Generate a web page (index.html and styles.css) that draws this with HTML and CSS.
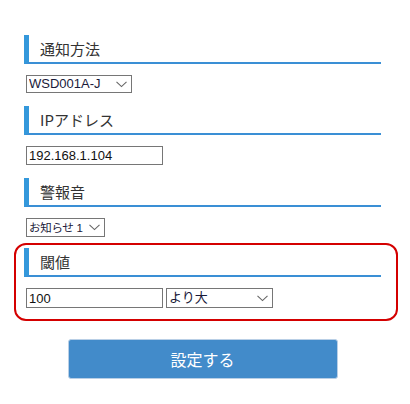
FILE: index.html
```html
<!DOCTYPE html>
<html lang="ja">
<head>
  <meta charset="UTF-8" />
  <title>設定</title>
  <link rel="stylesheet" href="styles.css">
</head>
<body>
  <div class="page">
    <!-- 通知方法 -->
    <div class="item">
      <h2 class="midashi">通知方法</h2>
      <select class="sentaku w-tsuchi">
        <option>WSD001A-J</option>
      </select>
    </div>
    <!-- IPアドレス -->
    <div class="item">
      <h2 class="midashi">IPアドレス</h2>
      <input class="nyuryoku" type="text" value="192.168.1.104">
    </div>
    <!-- 警報音 -->
    <div class="item mae-waku">
      <h2 class="midashi">警報音</h2>
      <select class="sentaku w-oto">
        <option>お知らせ 1</option>
      </select>
    </div>
    <!-- 閾値（赤枠） -->
    <div class="item waku">
      <h2 class="midashi">閾値</h2>
      <div class="gyou">
        <input class="nyuryoku" type="text" value="100">
        <select class="sentaku w-hikaku">
          <option>より大</option>
        </select>
      </div>
    </div>
    <div class="botan-area">
      <button class="botan">設定する</button>
    </div>
  </div>
</body>
</html>
```

FILE: styles.css
```css
/* 全体 */
body {
  margin: 0;
  padding: 0;
  background: #fff;
  font-family: "Noto Sans CJK JP", "Noto Sans", sans-serif;
  color: #333;
}
.page {
  width: 357px;
  margin-left: 24px;
  padding-top: 35px;
}
.item {
  margin-bottom: 13px;
}
.mae-waku {
  margin-bottom: 6px;
}
/* 見出し */
.midashi {
  display: flex;
  align-items: center;
  height: 29px;
  box-sizing: border-box;
  margin: 0 0 11px 0;
  padding: 0 0 0 11px;
  border-left: 5px solid #3498db;
  border-bottom: 2px solid #3a8fd5;
  font-size: 15px;
  font-weight: normal;
  line-height: 20px;
  color: #333;
}
/* セレクト */
.sentaku {
  -webkit-appearance: none;
  appearance: none;
  display: block;
  height: 18px;
  margin: 0 0 0 2px;
  padding: 0 14px 0 2px;
  border: 1px solid #767676;
  border-radius: 0;
  background: #fff url("data:image/svg+xml;utf8,<svg xmlns='http://www.w3.org/2000/svg' width='11' height='7'><path d='M0.5 0.8 L5.5 5.6 L10.5 0.8' fill='none' stroke='%23666' stroke-width='1.1'/></svg>") no-repeat right 4px center;
  font-family: "Liberation Sans", "Noto Sans CJK JP", sans-serif;
  font-size: 13px;
  line-height: 16px;
  color: #1a1a3a;
  box-sizing: border-box;
}
.w-tsuchi { width: 106px; }
.w-oto { width: 79px; height: 19px; font-size: 11.5px; letter-spacing: -0.3px; }
.w-hikaku { width: 107px; height: 20px; margin-left: 0; }
/* テキスト入力 */
.nyuryoku {
  display: block;
  width: 137px;
  height: 19px;
  margin: 0 0 0 2px;
  padding: 0 2px;
  border: 1px solid #767676;
  border-radius: 0;
  font-family: "Liberation Sans", sans-serif;
  font-size: 13px;
  color: #111;
  box-sizing: border-box;
}
.gyou {
  display: flex;
  gap: 3px;
}
.gyou .nyuryoku {
  height: 20px;
}
/* 赤枠 */
.waku {
  margin: 0 -17px 0 -10px;
  padding: 3px 15px 11px 8px;
  border: 2px solid #d40000;
  border-radius: 12px;
}
/* ボタン */
.botan-area {
  display: flex;
  justify-content: center;
  padding-top: 18px;
}
.botan {
  width: 270px;
  height: 40px;
  border: 1px solid #b9cfe6;
  border-radius: 3px;
  background: #428bca;
  color: #fff;
  font-family: "Noto Sans CJK JP", sans-serif;
  font-size: 16px;
  cursor: pointer;
}
```
